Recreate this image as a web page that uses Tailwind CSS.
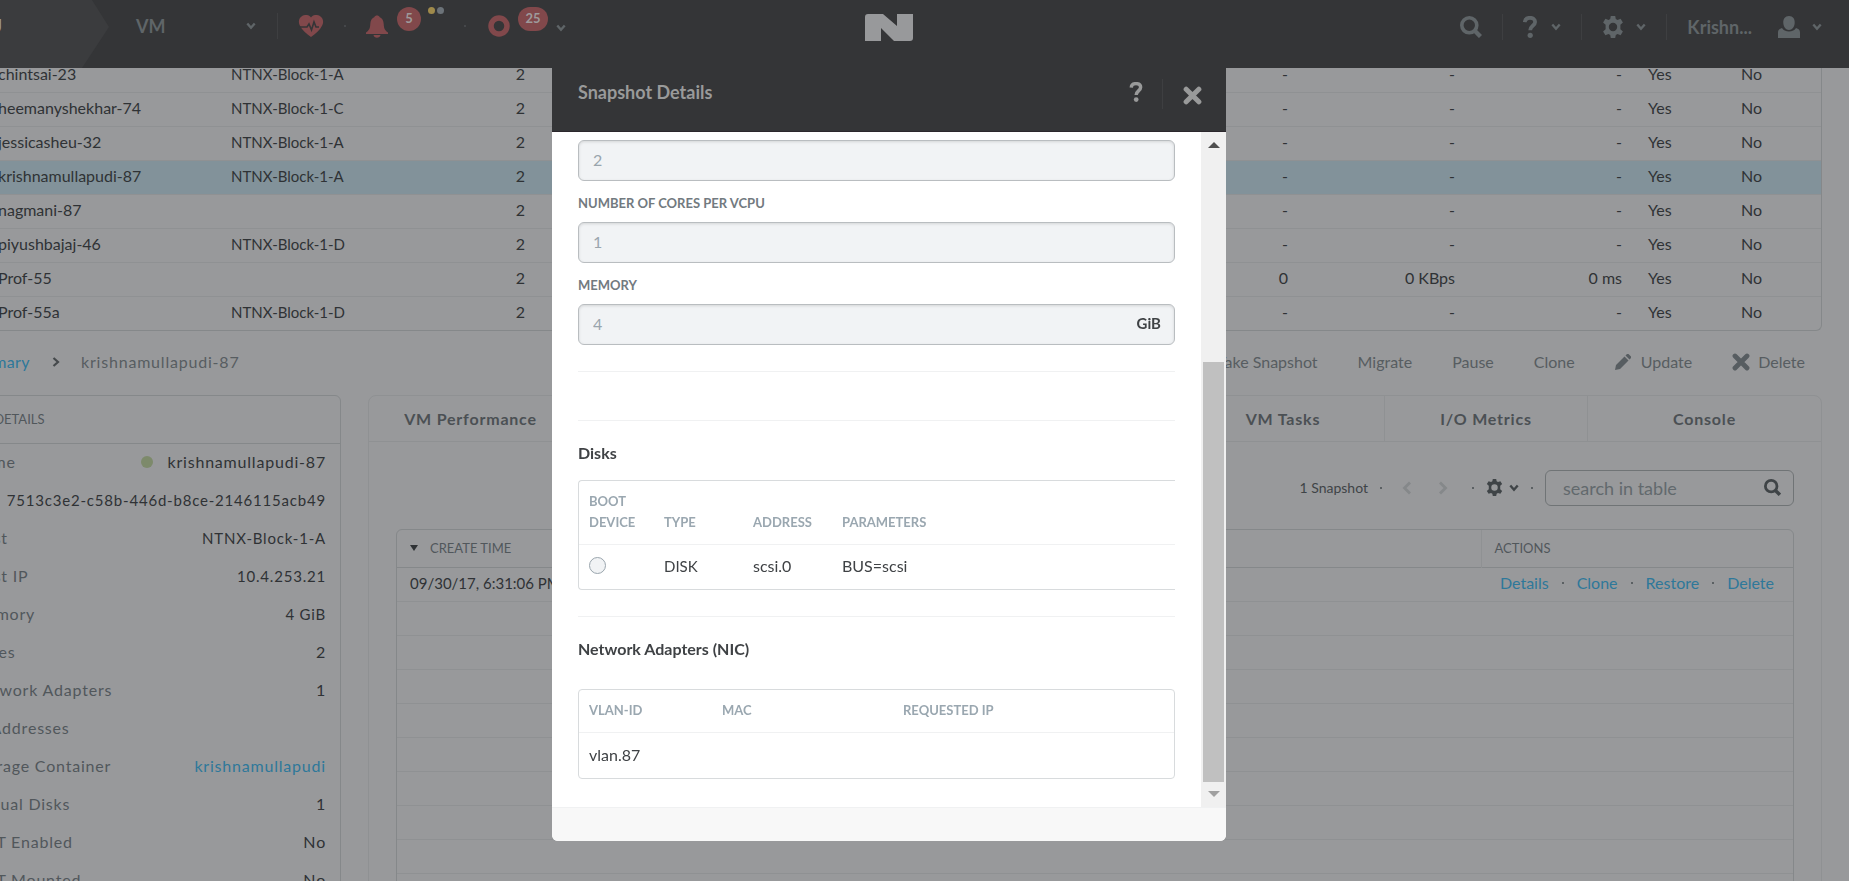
<!DOCTYPE html>
<html lang="en">
<head>
<meta charset="utf-8">
<meta name="viewport" content="width=device-width, initial-scale=1">
<title>VM - Snapshot Details</title>
<script src="https://cdn.jsdelivr.net/npm/@tailwindcss/browser@4"></script>
</head>
<body class="h-screen overflow-hidden bg-[#98999b] font-['Lato','Noto_Sans',sans-serif] text-base text-[#2f3235]">

<svg class="hidden" aria-hidden="true">
  <symbol id="chev" viewBox="0 0 10 8"><path d="M1.3 1.5 5 5.7 8.7 1.5" fill="none" stroke="currentColor" stroke-width="2.4"/></symbol>
  <symbol id="gear" viewBox="0 0 22 22"><path fill="currentColor" fill-rule="evenodd" d="M8.8 0h4.4l.6 3 1.7.9 3.1-1.1 2.3 3.8-2.5 2.2v4.4l2.5 2.2-2.3 3.8-3.1-1.1-1.7.9-.6 3H8.8l-.6-3-1.7-.9-3.1 1.1-2.3-3.800 2.500-2.200V8.800L1.100 6.600l2.300-3.800 3.100 1.100 1.700-.9zM11 6.800a4.200 4.200 0 1 0 0 8.400 4.200 4.200 0 0 0 0-8.400z"/></symbol>
  <symbol id="mag" viewBox="0 0 22 22"><g fill="none" stroke="currentColor"><circle cx="9.300" cy="9.300" r="7.500" stroke-width="3.600"/><path d="M14.500 14.500 20.500 20.500" stroke-width="4.400"/></g></symbol>
  <symbol id="cross" viewBox="0 0 18 18"><path d="M3 3 15 15M15 3 3 15" fill="none" stroke="currentColor" stroke-width="4.800" stroke-linecap="round"/></symbol>
  <symbol id="help" viewBox="0 0 14 22"><path d="M1.800 6.200C2 3.200 4 1.800 7 1.800c3 0 5.100 1.500 5.100 4.100 0 3.900-4.900 3.900-4.900 8.300" fill="none" stroke="currentColor" stroke-width="3.800"/><circle cx="7.200" cy="19.300" r="2.600" fill="currentColor"/></symbol>
</svg>

<div class="-ml-[71px] flex h-full flex-col">

  <header class="relative flex h-[68px] shrink-0 justify-between bg-[#343537] text-[#5f6568]">
    <div class="flex h-[52px] items-center">
      <button class="relative h-[68px] w-[180px] shrink-0 self-start" aria-label="Cluster">
        <svg class="absolute inset-0 size-full" viewBox="0 0 180 68"><path fill="#3b3c3e" d="M0 0H163L180 27 153 68H0z"/></svg>
        <span class="relative block w-[73px] pb-4 text-right text-lg font-bold text-[#98999b]">U</span>
      </button>
      <button class="ml-[27px] flex w-[120px] items-center justify-between text-lg font-bold">VM <svg class="h-2 w-2.5"><use href="#chev"/></svg></button>
      <span class="ml-[21px] h-[26px] w-px bg-[#3e3f41]"></span>
      <button class="ml-5" aria-label="Health"><svg class="h-[22px] w-[26px]" viewBox="0 0 26 22"><path fill="#81484b" d="M13 2.500C15-.6 19-.5 21.500.8c3.600 1.900 4.500 6 2.800 9.400C22 15 17.500 19 13 22 8.500 19 4 15 1.700 10.200 0 6.800.900 2.700 4.500.8 7-.5 11-.6 13 2.500z"/><path d="M0 12h9l2-3 2.500 6 2.500-8 2 5h3" fill="none" stroke="#343537" stroke-width="1.600"/></svg></button>
      <span class="ml-5 size-0.5 bg-[#45474a]"></span>
      <button class="ml-5 flex items-center" aria-label="Alerts: 5"><svg class="h-[23px] w-[22px]" viewBox="0 0 22 23"><path fill="#81484b" d="M8.500 2C8.700 0 13.300 0 13.500 2c3 1.200 4 3.700 4.200 7 .2 4.500 1.300 6.500 4.300 8.500V19H0v-1.500C3 15.500 4.100 13.500 4.300 9c.2-3.300 1.200-5.800 4.200-7zM7.500 20h7c-.5 3.500-6.500 3.500-7 0z"/></svg></button>
      <span class="mb-3.5 ml-[9px] flex size-6 items-center justify-center rounded-full bg-[#81484b] text-[13px] font-bold text-[#9e9a9b]">5</span>
      <span class="mb-[31px] ml-[7px] flex gap-0.5"><i class="size-[7px] rounded-full bg-[#9f8a4b]"></i><i class="size-[7px] rounded-full bg-[#6c7379]"></i></span>
      <span class="ml-5 size-0.5 bg-[#45474a]"></span>
      <button class="ml-[22px]" aria-label="Tasks"><svg class="size-[22px]" viewBox="0 0 22 22"><circle cx="11" cy="11" r="8" fill="none" stroke="#81484b" stroke-width="5.500"/></svg></button>
      <span class="mb-3.5 ml-2 flex h-6 w-[30px] items-center justify-center rounded-full bg-[#81484b] text-[13px] font-bold text-[#9e9a9b]">25</span>
      <svg class="ml-2 mt-1 h-2 w-2.5"><use href="#chev"/></svg>
    </div>
    <svg class="absolute left-1/2 top-3.5 h-[27px] w-12 -translate-x-1/2" viewBox="0 0 48 27"><path fill="#98999b" d="M3 0H18L32 12V0H48V24a3 3 0 0 1-3 3H29L16 14V27H0V3a3 3 0 0 1 3-3z"/></svg>
    <div class="mr-[27px] flex h-[54px] items-center">
      <button aria-label="Search"><svg class="size-[22px]"><use href="#mag"/></svg></button>
      <span class="ml-5 h-[26px] w-px bg-[#3e3f41]"></span>
      <button class="ml-5 flex items-center gap-3.5" aria-label="Help"><svg class="h-[22px] w-3.5"><use href="#help"/></svg><svg class="h-2 w-2.5"><use href="#chev"/></svg></button>
      <span class="ml-5 h-[26px] w-px bg-[#3e3f41]"></span>
      <button class="ml-5 flex items-center gap-3" aria-label="Settings"><svg class="size-[22px]"><use href="#gear"/></svg><svg class="h-2 w-2.5"><use href="#chev"/></svg></button>
      <span class="ml-5 h-[26px] w-px bg-[#3e3f41]"></span>
      <button class="ml-5 flex items-center text-lg font-bold">Krishn...<svg class="ml-[26px] size-[22px]" viewBox="0 0 22 22"><path fill="currentColor" d="M11 0c4 0 6 3 5.700 7-.3 4-2.500 7-5.700 7s-5.400-3-5.700-7C5 3 7 0 11 0zM4 12c2 4.500 12 4.500 14 0 2.500.7 4 2 4 4.500V22H0v-5.500C0 14 1.500 12.700 4 12z"/></svg><svg class="ml-3 h-2 w-2.5"><use href="#chev"/></svg></button>
    </div>
  </header>

  <main class="-mt-2.5 min-h-0 flex-1 overflow-hidden pl-7 pr-[27px]">
    <div class="overflow-hidden rounded-b-md border border-t-0 border-[#85888a]">
    <table class="w-full table-fixed">
      <colgroup><col class="w-[273px]"><col class="w-[200px]"><col class="w-[94px]"><col><col class="w-[167px]"><col class="w-[167px]"><col class="w-[119px]"><col class="w-[80px]"></colgroup>
      <tbody id="vms" class="[&_td]:h-[34px] [&_td]:p-0 [&_td]:pb-0.5 [&_td]:whitespace-nowrap [&_tr]:border-b [&_tr]:border-[#8f9193]"></tbody>
    </table>
    </div>

    <div class="flex h-16 items-center justify-between pb-0.5 pr-[17px] text-[#575d61]">
      <nav class="flex items-center tracking-wide" aria-label="Breadcrumb"><a href="#" class="w-[73px] text-right text-[#2e789a]">Summary</a><svg class="ml-[22px] h-2.5 w-2 text-[#45494c]" viewBox="0 0 8 10"><path d="M1.500 1 6 5 1.500 9" fill="none" stroke="currentColor" stroke-width="2.200"/></svg><span class="ml-[21px] tracking-wider">krishnamullapudi-87</span></nav>
      <div class="flex gap-10">
        <button>Take Snapshot</button><button>Migrate</button><button>Pause</button><button>Clone</button>
        <button class="flex items-center gap-2.5"><svg class="size-4" viewBox="0 0 16 16"><path fill="currentColor" d="M0 16l1-5L9.500 2.500l4 4L5 15zM10.500 1.500 12 0h1.500L16 2.500V4l-1.500 1.500z"/></svg>Update</button>
        <button class="flex items-center gap-2"><svg class="size-[18px]"><use href="#cross"/></svg>Delete</button>
      </div>
    </div>

    <div class="flex items-start gap-[27px]">
      <section class="w-96 shrink-0 rounded-md border border-[#85888a]">
        <h2 class="h-12 border-b border-[#85888a] pl-3 text-[13px] leading-[46px] text-[#51575b]">VM DETAILS</h2>
        <dl id="details" class="pb-4 tracking-wider"></dl>
      </section>

      <section class="min-w-0 flex-1 rounded-lg border border-[#8f9193]">
        <div class="flex h-[46px] border-b border-[#8f9193] font-bold tracking-wider text-[#4b5054]">
          <button class="w-[203px]">VM Performance</button>
          <button class="w-[203px] border-l border-[#8f9193]">Virtual Disks</button>
          <button class="w-[203px] border-l border-[#8f9193]">VM NICs</button>
          <button class="w-[203px] border-l border-[#8f9193]">VM Snapshots</button>
          <button class="w-[203px] border-l border-[#8f9193]">VM Tasks</button>
          <button class="w-[203px] border-l border-[#8f9193]">I/O Metrics</button>
          <button class="flex-1 border-l border-[#8f9193]">Console</button>
        </div>
        <div class="px-[27px]">
          <div class="flex h-[87px] items-center justify-end pt-1 text-[#3f4447]">
            <span class="text-sm">1 Snapshot</span><span class="ml-3 size-0.5 bg-[#5b6063]"></span>
            <button class="ml-5 text-[#85888a]" aria-label="Previous page"><svg class="h-3.5 w-2.5" viewBox="0 0 10 14"><path d="M8 1.500 2.500 7 8 12.500" fill="none" stroke="currentColor" stroke-width="2.800"/></svg></button>
            <button class="ml-[26px] text-[#85888a]" aria-label="Next page"><svg class="h-3.5 w-2.5" viewBox="0 0 10 14"><path d="M2 1.500 7.500 7 2 12.500" fill="none" stroke="currentColor" stroke-width="2.800"/></svg></button>
            <span class="ml-6 size-0.5 bg-[#5b6063]"></span>
            <button class="ml-3 flex items-center gap-1.5" aria-label="Table settings"><svg class="size-[17px]"><use href="#gear"/></svg><svg class="h-2 w-2.5"><use href="#chev"/></svg></button>
            <span class="ml-3 size-0.5 bg-[#5b6063]"></span>
            <label class="ml-3 flex h-9 w-[249px] items-center rounded-md border border-[#707476] pl-[17px] pr-3"><span class="sr-only">Search in table</span><input type="text" placeholder="search in table" class="min-w-0 flex-1 bg-transparent text-lg leading-6 outline-none placeholder:text-[#62696d]"><svg class="size-[17px]"><use href="#mag"/></svg></label>
          </div>
          <div class="rounded-t-md border border-[#85888a]">
          <table class="w-full table-fixed">
            <colgroup><col><col class="w-[312px]"></colgroup>
            <thead><tr class="h-[37px] border-b border-[#85888a] text-left text-[13px] text-[#51575b]"><th class="pl-[13px] font-normal"><span class="flex items-center gap-3"><svg class="h-1.5 w-2" viewBox="0 0 8 6"><path fill="#2f3235" d="M0 0h8L4 6z"/></svg>CREATE TIME</span></th><th class="border-l border-[#8f9193] pl-[13px] font-normal">ACTIONS</th></tr></thead>
            <tbody id="snaps" class="[&_td]:h-[34px] [&_td]:p-0 [&_td]:pb-0.5 [&_tr]:border-b [&_tr]:border-[#8f9193]">
              <tr><td><span class="pl-[13px] text-[15px]">09/30/17, 6:31:06 PM</span></td><td><div class="flex items-center justify-end gap-[13px] pr-[19px] text-[#2e789a]"><a href="#">Details</a><i class="size-0.5 bg-[#5b6063]"></i><a href="#">Clone</a><i class="size-0.5 bg-[#5b6063]"></i><a href="#">Restore</a><i class="size-0.5 bg-[#5b6063]"></i><a href="#">Delete</a></div></td></tr>
            </tbody>
          </table>
          </div>
        </div>
      </section>
    </div>
  </main>
</div>

<div class="pointer-events-none fixed -left-[71px] right-0 top-[68px] flex justify-center">
  <div role="dialog" aria-labelledby="dlg-title" class="pointer-events-auto w-[674px] overflow-hidden rounded-b-md bg-white">
    <div class="flex h-16 items-start border-b border-[#2b272c] bg-[#343537] pl-[26px] pr-6 text-[#999a9a]">
      <h1 id="dlg-title" class="mt-2.5 flex-1 text-lg font-bold">Snapshot Details</h1>
      <button class="mt-[14px]" aria-label="Help"><svg class="h-5 w-3.5"><use href="#help"/></svg></button>
      <span class="ml-[19px] mt-[11px] h-[30px] w-px bg-[#3e3f41]"></span>
      <button class="ml-5 mt-[18px]" aria-label="Close"><svg class="size-[19px]"><use href="#cross"/></svg></button>
    </div>
    <div class="flex">
      <div class="min-w-0 flex-1 pb-7 pl-[26px] pr-[26px] pt-2 text-[#3f4245]">
        <input type="text" value="2" readonly aria-label="vCPU(s)" class="block h-[41px] w-full rounded-md border border-[#b9bdc0] bg-[#f1f3f5] pb-0.5 pl-3.5 text-[#9aa5ad] shadow-[inset_0_1px_3px_rgba(0,0,0,0.12)]">
        <label for="cores" class="block h-[41px] pt-[13px] text-[13px] font-bold leading-[18px] text-[#727a80]">NUMBER OF CORES PER VCPU</label>
        <input id="cores" type="text" value="1" readonly class="block h-[41px] w-full rounded-md border border-[#b9bdc0] bg-[#f1f3f5] pb-0.5 pl-3.5 text-[#9aa5ad] shadow-[inset_0_1px_3px_rgba(0,0,0,0.12)]">
        <label for="mem" class="block h-[41px] pt-[13px] text-[13px] font-bold leading-[18px] text-[#727a80]">MEMORY</label>
        <div class="flex h-[41px] items-center rounded-md border border-[#b9bdc0] bg-[#f1f3f5] pb-0.5 pl-3.5 pr-[13px] shadow-[inset_0_1px_3px_rgba(0,0,0,0.12)]"><input id="mem" type="text" value="4" readonly class="min-w-0 flex-1 bg-transparent text-[#9aa5ad]"><span class="text-[15px] font-bold">GiB</span></div>
        <hr class="mt-[26px] border-[#f0f1f2]">
        <hr class="mt-12 border-[#f0f1f2]">
        <h2 class="mt-5 font-bold leading-6">Disks</h2>
        <div class="mt-[15px] rounded-l border border-r-0 border-[#d8dbdd]">
        <table class="w-full table-fixed text-left">
          <colgroup><col class="w-[75px]"><col class="w-[89px]"><col class="w-[89px]"><col></colgroup>
          <thead><tr class="h-[63px] border-b border-[#f0f1f2] align-bottom text-[13px] leading-[21px] text-[#9aa7b0] [&>th]:pb-[11px]"><th class="pl-2.5">BOOT<br>DEVICE</th><th class="pl-2.5">TYPE</th><th class="pl-2.5">ADDRESS</th><th class="pl-2.5">PARAMETERS</th></tr></thead>
          <tbody><tr class="h-[45px] [&>td]:pb-0.5"><td class="pl-2.5"><input type="radio" name="boot" aria-label="Boot device" class="block size-[17px] appearance-none rounded-full border border-[#9aa5ad] bg-[#f1f3f5]"></td><td class="pl-2.5 text-[15px]">DISK</td><td class="pl-2.5">scsi.0</td><td class="pl-2.5">BUS=scsi</td></tr></tbody>
        </table>
        </div>
        <hr class="mt-[26px] border-[#f0f1f2]">
        <h2 class="mt-5 font-bold leading-6">Network Adapters (NIC)</h2>
        <div class="mt-7 rounded border border-[#d8dbdd]">
        <table class="w-full table-fixed text-left">
          <colgroup><col class="w-[133px]"><col class="w-[181px]"><col></colgroup>
          <thead><tr class="h-[42px] border-b border-[#f0f1f2] text-[13px] text-[#9aa7b0]"><th class="pl-2.5">VLAN-ID</th><th class="pl-2.5">MAC</th><th class="pl-2.5">REQUESTED IP</th></tr></thead>
          <tbody><tr class="h-[46px]"><td class="pl-2.5">vlan.87</td><td></td><td></td></tr></tbody>
        </table>
        </div>
      </div>
      <div class="flex w-[25px] shrink-0 flex-col items-center bg-[#f0f0f0]" aria-hidden="true">
        <svg class="mt-2.5 h-1.5 w-3" viewBox="0 0 12 6"><path fill="#4f4f4f" d="M0 6 6 0l6 6z"/></svg>
        <span class="mt-[214px] w-[21px] flex-1 bg-[#c0c0c0]"></span>
        <svg class="mb-2.5 mt-[9px] h-1.5 w-3" viewBox="0 0 12 6"><path fill="#a0a0a0" d="M0 0h12L6 6z"/></svg>
      </div>
    </div>
    <div class="h-[34px] border-t border-[#f0f1f2] bg-[#f8f8f8]"></div>
  </div>
</div>

<script>
const vms = [
  ['chintsai-23', 'NTNX-Block-1-A'], ['heemanyshekhar-74', 'NTNX-Block-1-C'], ['jessicasheu-32', 'NTNX-Block-1-A'],
  ['krishnamullapudi-87', 'NTNX-Block-1-A'], ['nagmani-87', ''], ['piyushbajaj-46', 'NTNX-Block-1-D'],
  ['Prof-55', '', '0', '0 KBps', '0 ms'], ['Prof-55a', 'NTNX-Block-1-D']];
document.getElementById('vms').innerHTML = vms.map(([n, h, a = '-', b = '-', c = '-'], i) =>
  `<tr class="${i === 3 ? 'bg-[#82929a]' : ''} last:border-b-0"><td><span class="pl-10">${n}</span></td><td class="text-[15px]">${h}</td><td class="text-right">2</td><td class="text-right">${a}</td><td class="text-right">${b}</td><td class="text-right">${c}</td><td><span class="pl-[26px]">Yes</span></td><td>No</td></tr>`).join('');
const details = [['Name', 'krishnamullapudi-87'], ['ID', '7513c3e2-c58b-446d-b8ce-2146115acb49'], ['Host', 'NTNX-Block-1-A'],
  ['Host IP', '10.4.253.21'], ['Memory', '4 GiB'], ['Cores', '2'], ['Network Adapters', '1'], ['IP Addresses', ''],
  ['Storage Container', 'krishnamullapudi'], ['Virtual Disks', '1'], ['NGT Enabled', 'No'], ['NGT Mounted', 'No']];
document.getElementById('details').innerHTML = details.map(([k, v], i) =>
  `<div class="flex h-[38px] items-center justify-between pb-0.5 pl-[13px] pr-3.5"><dt class="text-[#51575b]">${k}</dt><dd class="${i > 0 && i < 5 ? 'text-[15px]' : ''} flex items-center gap-3.5">${i === 0 ? '<i class="size-3 rounded-full bg-[#7d8a6b]"></i>' : ''}${i === 8 ? `<a href="#" class="text-[#2e789a]">${v}</a>` : v}</dd></div>`).join('');
document.getElementById('snaps').insertAdjacentHTML('beforeend', '<tr><td></td><td></td></tr>'.repeat(9));
</script>
</body>
</html>
